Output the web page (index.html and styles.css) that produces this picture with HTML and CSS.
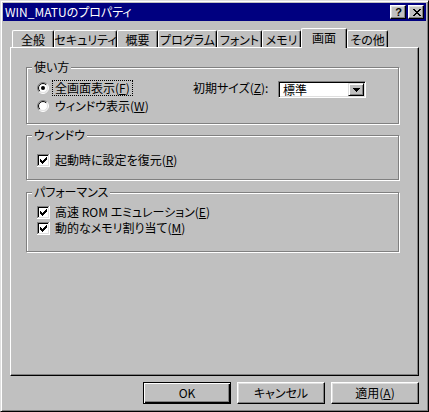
FILE: index.html
```html
<!DOCTYPE html>
<html lang="ja">
<head>
<meta charset="utf-8">
<title>WIN_MATUのプロパティ</title>
<link rel="stylesheet" href="styles.css">
</head>
<body>
<!-- shared clip paths for the bevelled radio buttons -->
<svg class="defs" width="0" height="0" aria-hidden="true">
  <defs>
    <clipPath id="half-tl"><polygon points="0,0 12,0 0,12"/></clipPath>
    <clipPath id="half-br"><polygon points="12,0 12,12 0,12"/></clipPath>
  </defs>
</svg>

<div class="window">
  <div class="titlebar">
    <span class="title">WIN_MATUのプロパティ</span>
    <div class="caption-buttons">
      <span class="cap-btn help">?</span>
      <span class="cap-btn close">
        <svg width="8" height="7" viewBox="0 0 8 7" shape-rendering="crispEdges"><path d="M0 0h2v1H0zM6 0h2v1H6zM1 1h2v1H1zM5 1h2v1H5zM2 2h4v1H2zM3 3h2v1H3zM2 4h4v1H2zM1 5h2v1H1zM5 5h2v1H5zM0 6h2v1H0zM6 6h2v1H6z" fill="#000"/></svg>
      </span>
    </div>
  </div>

  <div class="tabs">
    <div class="tab">全般</div>
    <div class="tab">セキュリティ</div>
    <div class="tab">概要</div>
    <div class="tab">プログラム</div>
    <div class="tab">フォント</div>
    <div class="tab">メモリ</div>
    <div class="tab active">画面</div>
    <div class="tab">その他</div>
  </div>

  <div class="panel">
    <div class="group group-usage">
      <span class="group-label">使い方</span>
      <div class="usage-body">
        <div class="options">
          <div class="row">
            <svg class="radio" viewBox="0 0 12 12">
              <circle cx="6" cy="6" r="5" fill="#fff"/>
              <circle cx="6" cy="6" r="5.5" fill="none" stroke="#808080" clip-path="url(#half-tl)"/>
              <circle cx="6" cy="6" r="5.5" fill="none" stroke="#fff" clip-path="url(#half-br)"/>
              <circle cx="6" cy="6" r="4.5" fill="none" stroke="#000" clip-path="url(#half-tl)"/>
              <circle cx="6" cy="6" r="4.5" fill="none" stroke="#dfdfdf" clip-path="url(#half-br)"/>
              <circle cx="6" cy="6" r="2" fill="#000"/>
            </svg>
            <span class="text focused">全画面表示(<u>F</u>)</span>
          </div>
          <div class="row">
            <svg class="radio" viewBox="0 0 12 12">
              <circle cx="6" cy="6" r="5" fill="#fff"/>
              <circle cx="6" cy="6" r="5.5" fill="none" stroke="#808080" clip-path="url(#half-tl)"/>
              <circle cx="6" cy="6" r="5.5" fill="none" stroke="#fff" clip-path="url(#half-br)"/>
              <circle cx="6" cy="6" r="4.5" fill="none" stroke="#000" clip-path="url(#half-tl)"/>
              <circle cx="6" cy="6" r="4.5" fill="none" stroke="#dfdfdf" clip-path="url(#half-br)"/>
            </svg>
            <span class="text">ウィンドウ表示(<u>W</u>)</span>
          </div>
        </div>
        <div class="size">
          <span class="size-label">初期サイズ(<u>Z</u>):</span>
          <div class="combo">
            <span class="combo-value">標準</span>
            <span class="drop">
              <svg width="7" height="4" viewBox="0 0 7 4" shape-rendering="crispEdges"><path d="M0 0h7v1H0zM1 1h5v1H1zM2 2h3v1H2zM3 3h1v1H3z" fill="#000"/></svg>
            </span>
          </div>
        </div>
      </div>
    </div>

    <div class="group group-window">
      <span class="group-label">ウィンドウ</span>
      <div class="row check-row">
        <svg class="checkbox" viewBox="0 0 13 13" shape-rendering="crispEdges">
          <rect width="13" height="13" fill="#fff"/>
          <path d="M0 0h12v1H1v11H0z" fill="#808080"/>
          <path d="M1 1h10v1H2v9H1z" fill="#000"/>
          <path d="M12 0h1v13H0v-1h12z" fill="#fff"/>
          <path d="M11 1h1v11H1v-1h10z" fill="#dfdfdf"/>
          <path d="M3 5h1v3H3zM4 6h1v3H4zM5 7h1v3H5zM6 6h1v3H6zM7 5h1v3H7zM8 4h1v3H8zM9 3h1v3H9z" fill="#000"/>
        </svg>
        <span class="text">起動時に設定を復元(<u>R</u>)</span>
      </div>
    </div>

    <div class="group group-perf">
      <span class="group-label">パフォーマンス</span>
      <div class="row check-row">
        <svg class="checkbox" viewBox="0 0 13 13" shape-rendering="crispEdges">
          <rect width="13" height="13" fill="#fff"/>
          <path d="M0 0h12v1H1v11H0z" fill="#808080"/>
          <path d="M1 1h10v1H2v9H1z" fill="#000"/>
          <path d="M12 0h1v13H0v-1h12z" fill="#fff"/>
          <path d="M11 1h1v11H1v-1h10z" fill="#dfdfdf"/>
          <path d="M3 5h1v3H3zM4 6h1v3H4zM5 7h1v3H5zM6 6h1v3H6zM7 5h1v3H7zM8 4h1v3H8zM9 3h1v3H9z" fill="#000"/>
        </svg>
        <span class="text">高速 ROM エミュレーション(<u>E</u>)</span>
      </div>
      <div class="row check-row">
        <svg class="checkbox" viewBox="0 0 13 13" shape-rendering="crispEdges">
          <rect width="13" height="13" fill="#fff"/>
          <path d="M0 0h12v1H1v11H0z" fill="#808080"/>
          <path d="M1 1h10v1H2v9H1z" fill="#000"/>
          <path d="M12 0h1v13H0v-1h12z" fill="#fff"/>
          <path d="M11 1h1v11H1v-1h10z" fill="#dfdfdf"/>
          <path d="M3 5h1v3H3zM4 6h1v3H4zM5 7h1v3H5zM6 6h1v3H6zM7 5h1v3H7zM8 4h1v3H8zM9 3h1v3H9z" fill="#000"/>
        </svg>
        <span class="text">動的なメモリ割り当て(<u>M</u>)</span>
      </div>
    </div>
  </div>

  <div class="buttons">
    <button class="btn default">OK</button>
    <button class="btn">キャンセル</button>
    <button class="btn">適用(<u>A</u>)</button>
  </div>
</div>
</body>
</html>
```

FILE: styles.css
```css
* {
  box-sizing: border-box;
}

html,
body {
  margin: 0;
  padding: 0;
}

body {
  background: #c0c0c0;
  font-family: "Noto Sans CJK JP", "Noto Sans", sans-serif;
  font-size: 12px;
  line-height: 12px;
  color: #000;
  font-feature-settings: "palt";
}

.defs {
  position: absolute;
  width: 0;
  height: 0;
  overflow: hidden;
}

u {
  text-underline-offset: 1px;
}

/* ---- dialog frame ---- */
.window {
  width: 429px;
  height: 412px;
  display: flex;
  flex-direction: column;
  padding: 2px;
  background: #c0c0c0;
  border: 1px solid;
  border-color: #dfdfdf #000 #000 #dfdfdf;
  box-shadow: inset 1px 1px #fff, inset -1px -1px #808080;
}

.titlebar {
  height: 18px;
  flex: none;
  display: flex;
  align-items: center;
  justify-content: space-between;
  padding: 0 2px;
  background: #000080;
  color: #fff;
}

.title {
  white-space: nowrap;
  line-height: 18px;
}

.caption-buttons {
  display: flex;
  gap: 2px;
}

.cap-btn {
  width: 16px;
  height: 14px;
  display: flex;
  align-items: center;
  justify-content: center;
  background: #c0c0c0;
  color: #000;
  border: 1px solid;
  border-color: #fff #000 #000 #fff;
  box-shadow: inset -1px -1px #808080, inset 1px 1px #dfdfdf;
}

.cap-btn.help {
  font-family: "Liberation Sans", Arial, sans-serif;
  font-weight: bold;
  font-size: 11px;
  line-height: 11px;
  padding-left: 1px;
}

.cap-btn.close svg {
  display: block;
  margin-left: 1px;
}

/* ---- tab strip ---- */
.tabs {
  flex: none;
  height: 19px;
  margin-top: 7px;
  padding-left: 9px;
  display: flex;
  align-items: flex-end;
}

.tab {
  height: 17px;
  display: flex;
  align-items: center;
  justify-content: center;
  white-space: nowrap;
  background: #c0c0c0;
  border-top: 1px solid #fff;
  border-left: 1px solid #fff;
  border-right: 1px solid #000;
  border-radius: 2px 2px 0 0;
  box-shadow: inset -1px 0 #808080;
  padding-top: 1px;
}

.tab:nth-child(1) { width: 42px; }
.tab:nth-child(2) { width: 63px; }
.tab:nth-child(3) { width: 41px; }
.tab:nth-child(4) { width: 59px; }
.tab:nth-child(5) { width: 45px; }
.tab:nth-child(6) { width: 39px; }
.tab:nth-child(7) { width: 46px; }
.tab:nth-child(8) { width: 41px; }

.tab.active {
  height: 20px;
  margin-bottom: -1px;
  position: relative;
  z-index: 1;
  padding-top: 0;
  padding-bottom: 2px;
}

/* ---- tab page ---- */
.panel {
  flex: none;
  height: 329px;
  margin: 0 7px;
  padding: 19px 0 0 15px;
  display: flex;
  flex-direction: column;
  border: 1px solid;
  border-color: #fff #000 #000 #fff;
  box-shadow: inset -1px -1px #808080;
}

.group {
  position: relative;
  flex: none;
  width: 373px;
  padding-left: 10px;
  border: 1px solid #808080;
  box-shadow: inset 1px 1px #fff, 1px 1px #fff;
}

.group-label {
  position: absolute;
  top: -7px;
  left: 5px;
  padding: 0 2px;
  background: #c0c0c0;
  white-space: nowrap;
}

.group-usage {
  height: 57px;
  padding-top: 11px;
}

.group-window {
  height: 45px;
  margin-top: 11px;
  padding-top: 16px;
}

.group-perf {
  height: 60px;
  margin-top: 12px;
  padding-top: 11px;
}

.usage-body {
  display: flex;
  align-items: flex-start;
}

.options {
  width: 156px;
  display: flex;
  flex-direction: column;
}

.row {
  height: 18px;
  display: flex;
  align-items: center;
  white-space: nowrap;
}

.check-row {
  height: 16px;
}

.radio {
  width: 12px;
  height: 12px;
  flex: none;
  margin-right: 4px;
}

.checkbox {
  width: 13px;
  height: 13px;
  flex: none;
  margin-right: 4px;
}

.row .text {
  padding: 1px 2px;
}

.check-row .text {
  padding: 1px 1px;
}

.text.focused {
  outline: 1px dotted #000;
  outline-offset: 0;
}

/* ---- initial size combo ---- */
.size {
  display: flex;
  align-items: flex-start;
}

.size-label {
  width: 85px;
  line-height: 18px;
  white-space: nowrap;
}

.combo {
  width: 88px;
  height: 17px;
  margin-top: 2px;
  padding: 1px;
  display: flex;
  background: #fff;
  border: 1px solid;
  border-color: #808080 #fff #fff #808080;
  box-shadow: inset 1px 1px #000, inset -1px -1px #dfdfdf;
}

.combo-value {
  flex: 1;
  padding-left: 3px;
  line-height: 13px;
}

.drop {
  width: 16px;
  height: 13px;
  display: flex;
  align-items: center;
  justify-content: center;
  background: #c0c0c0;
  border: 1px solid;
  border-color: #dfdfdf #000 #000 #dfdfdf;
  box-shadow: inset 1px 1px #fff, inset -1px -1px #808080;
}

.drop svg {
  display: block;
}

/* ---- dialog buttons ---- */
.buttons {
  flex: none;
  margin-top: 6px;
  padding-right: 7px;
  display: flex;
  justify-content: flex-end;
  gap: 6px;
}

.btn {
  width: 88px;
  height: 22px;
  padding: 0;
  font: inherit;
  color: #000;
  background: #c0c0c0;
  border: 1px solid;
  border-color: #fff #000 #000 #fff;
  box-shadow: inset -1px -1px #808080, inset 1px 1px #dfdfdf;
  border-radius: 0;
}

.btn.default {
  border-color: #000;
  box-shadow: inset 1px 1px #fff, inset -1px -1px #000, inset -2px -2px #808080;
}
```
